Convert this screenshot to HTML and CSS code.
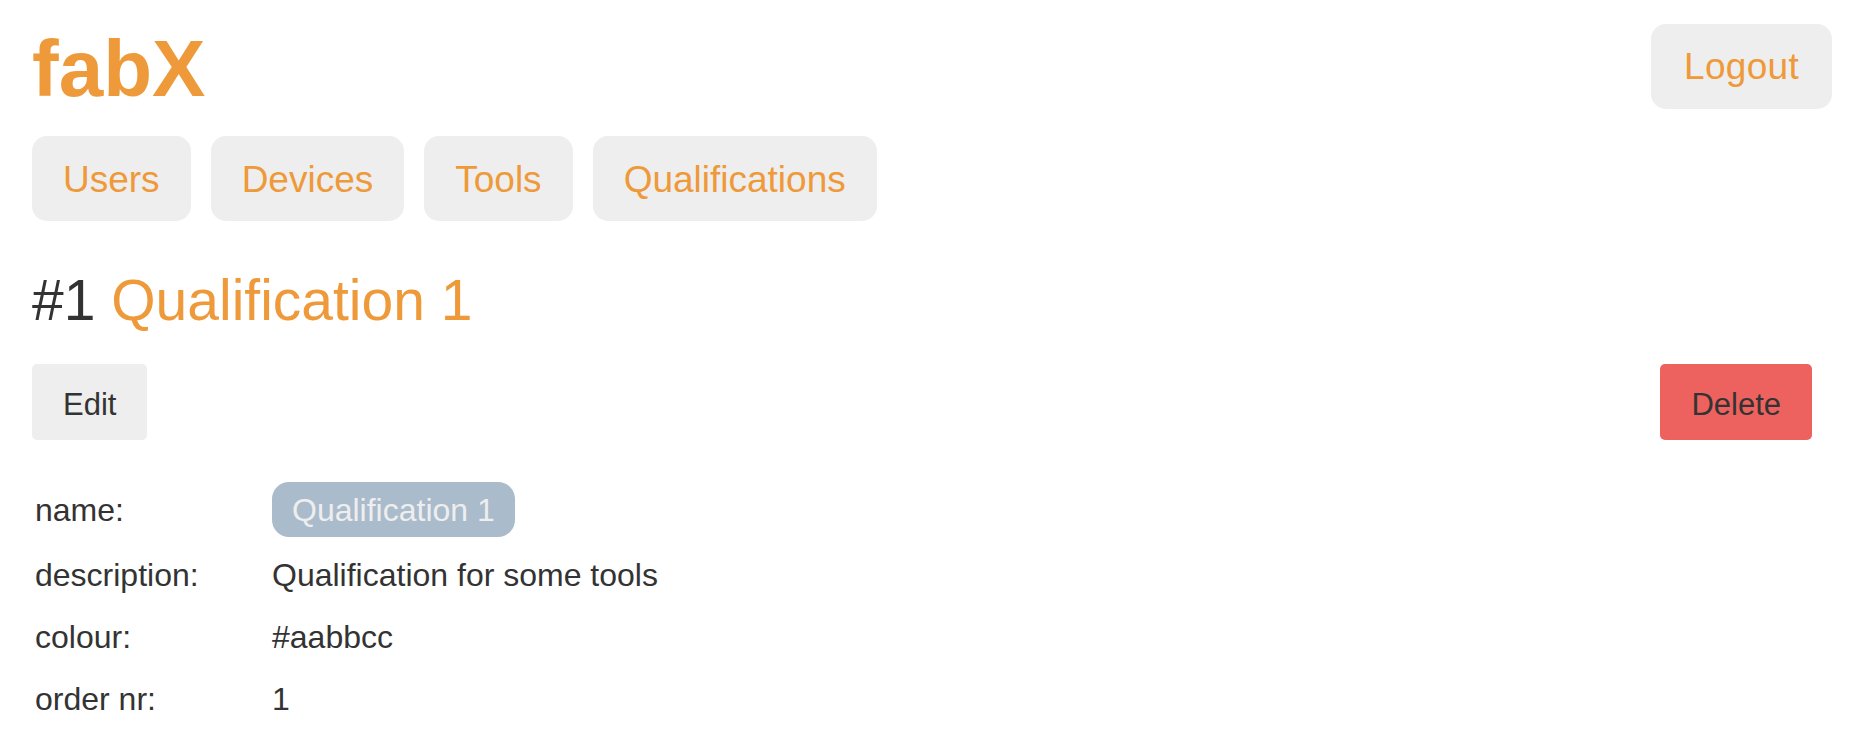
FILE: index.html
```html
<!DOCTYPE html>
<html lang="en">
<head>
<meta charset="utf-8">
<title>fabX - Qualification 1</title>
<link rel="stylesheet" href="styles.css">
</head>
<body>
<div class="page">
  <header class="topbar">
    <a class="logo" href="#">fabX</a>
    <a class="btn-nav btn-logout" href="#">Logout</a>
  </header>
  <nav class="nav">
    <a class="btn-nav" href="#">Users</a>
    <a class="btn-nav" href="#">Devices</a>
    <a class="btn-nav" href="#">Tools</a>
    <a class="btn-nav" href="#">Qualifications</a>
  </nav>
  <h1 class="title"><span class="title-id">#1</span> <span class="title-name">Qualification 1</span></h1>
  <div class="actions">
    <button class="btn">Edit</button>
    <button class="btn btn-danger">Delete</button>
  </div>
  <table class="details">
    <tr>
      <td class="label">name:</td>
      <td class="value"><span class="pill">Qualification 1</span></td>
    </tr>
    <tr>
      <td class="label">description:</td>
      <td class="value">Qualification for some tools</td>
    </tr>
    <tr>
      <td class="label">colour:</td>
      <td class="value">#aabbcc</td>
    </tr>
    <tr>
      <td class="label">order nr:</td>
      <td class="value">1</td>
    </tr>
  </table>
</div>
</body>
</html>
```

FILE: styles.css
```css
html, body {
  margin: 0;
  padding: 0;
  background: #ffffff;
}

body {
  font-family: "Liberation Sans", Helvetica, Arial, sans-serif;
  color: #333333;
  font-size: 32px;
}

.page {
  padding: 24px 22px 0 32px;
}

.topbar {
  display: flex;
  justify-content: space-between;
  align-items: flex-start;
}

.logo {
  display: block;
  margin-top: 2px;
  font-size: 80px;
  line-height: 85px;
  font-weight: bold;
  color: #ee9a3a;
  text-decoration: none;
}

.btn-nav {
  display: inline-block;
  padding: 22px 31px 19px;
  font-size: 37px;
  line-height: 44px;
  color: #ee9a3a;
  background: #eeeeee;
  border-radius: 15px;
  text-decoration: none;
}

.btn-logout {
  padding: 21px 33px 20px;
  letter-spacing: 0.3px;
}

.nav {
  display: flex;
  gap: 20px;
  margin-top: 25px;
}

.title {
  margin: 46px 0 0 0;
  font-size: 57px;
  line-height: 66px;
  font-weight: normal;
}

.title-id {
  color: #333333;
}

.title-name {
  color: #ee9a3a;
}

.actions {
  display: flex;
  justify-content: space-between;
  margin-top: 31px;
  margin-right: 20px;
}

.btn {
  font-family: inherit;
  font-size: 31px;
  line-height: 36px;
  padding: 23px 31px 17px;
  color: #333333;
  background: #eeeeee;
  border: none;
  border-radius: 5px;
  margin: 0;
}

.btn-danger {
  background: #ed625e;
}

.details {
  margin-top: 34px;
  border-collapse: collapse;
  border-spacing: 0;
}

.details td {
  padding: 8px 3px 6px;
  line-height: 48px;
  vertical-align: middle;
}

.details .label {
  width: 231px;
}

.pill {
  display: inline-block;
  vertical-align: top;
  padding: 9px 20px 7px;
  line-height: 39px;
  background: #aabbcc;
  color: #eeeeee;
  border-radius: 17px;
}
```
